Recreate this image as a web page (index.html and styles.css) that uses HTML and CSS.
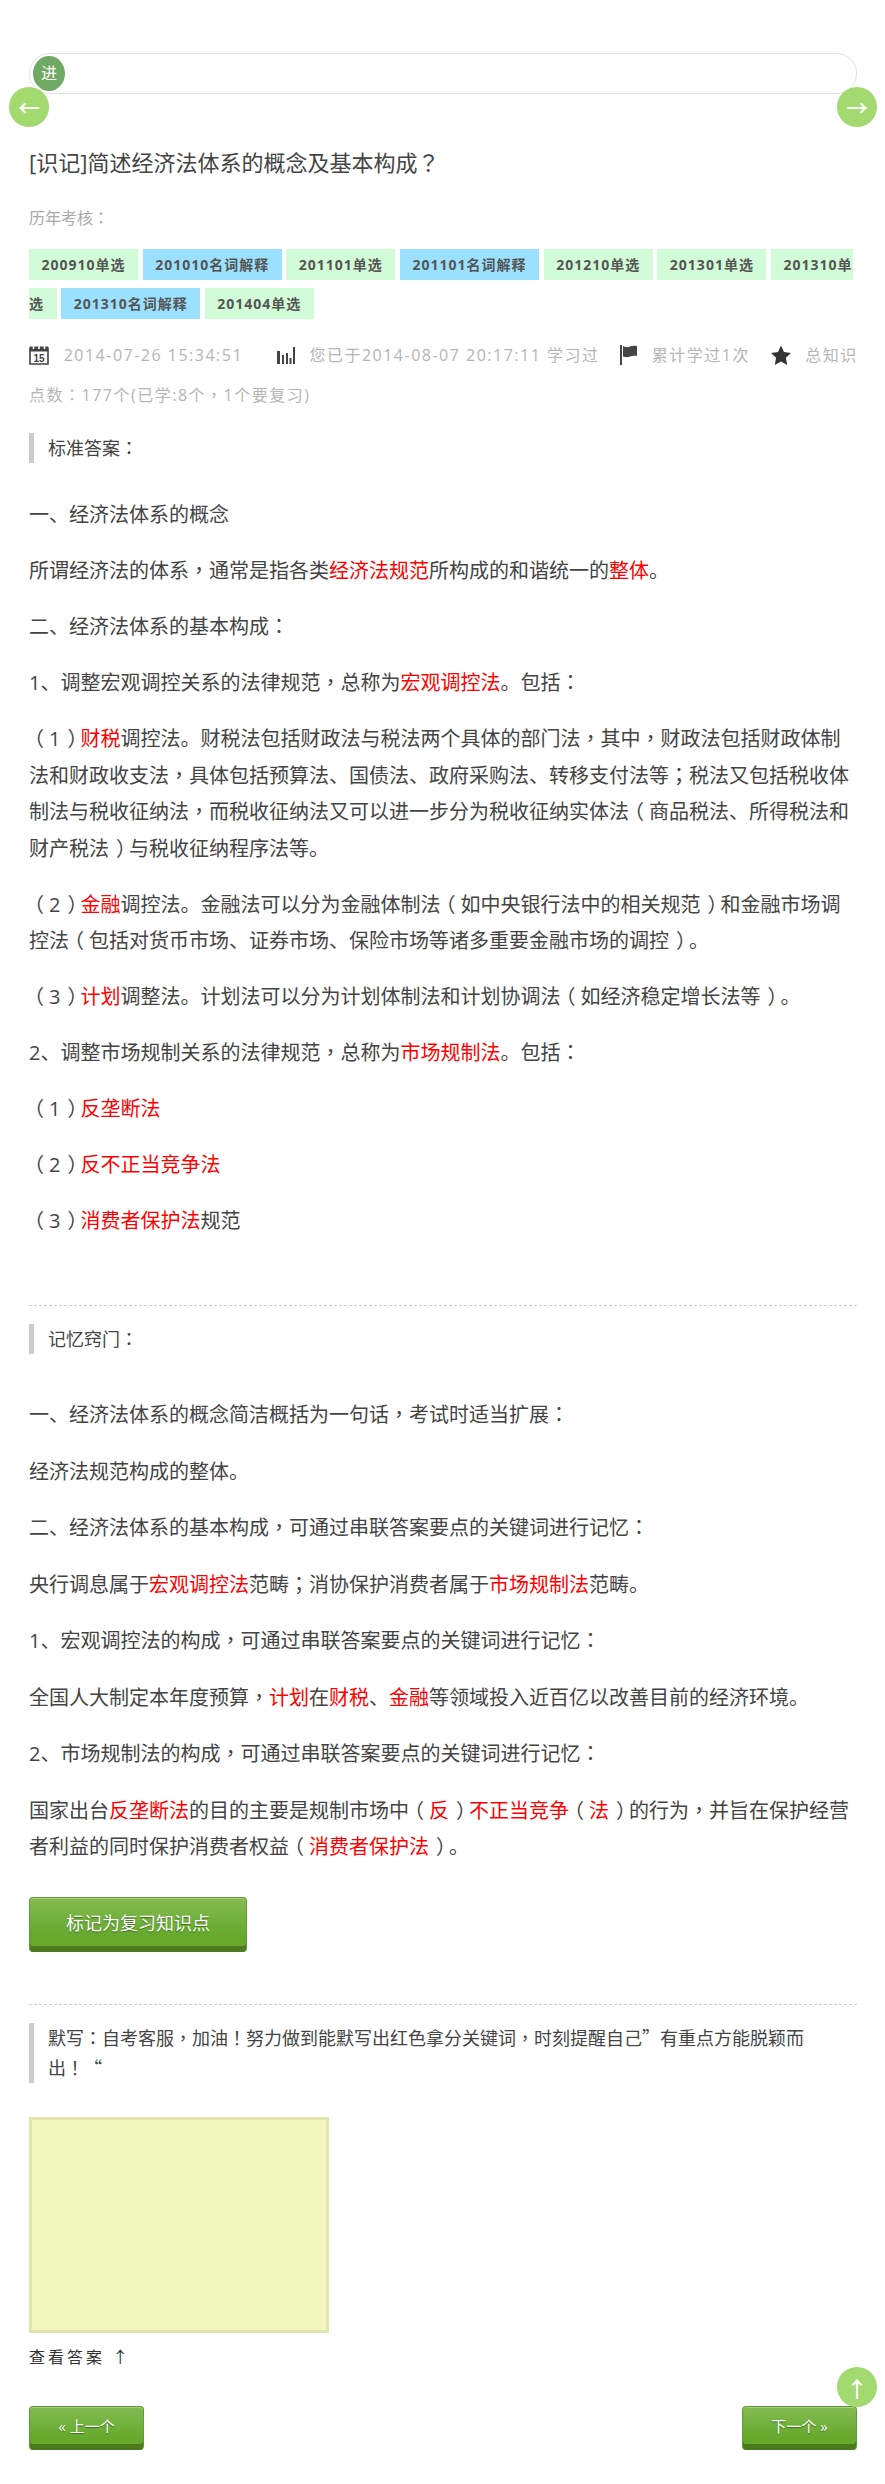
FILE: index.html
```html
<!DOCTYPE html>
<html>
<head>
<meta charset="utf-8">
<title>简述经济法体系的概念及基本构成</title>
<link rel="stylesheet" href="styles.css">
</head>
<body>
<div class="page">
  <div class="progress-wrap">
    <div class="progress"><span class="knob">进</span></div>
    <a class="round round-left">←</a>
    <a class="round round-right">→</a>
  </div>
  <h1 class="title">[识记]简述经济法体系的概念及基本构成<i class="p">？</i></h1>
  <p class="history">历年考核<i class="p">：</i></p>
  <div class="tags">
    <span class="tag">200910单选</span> <span class="tag blue">201010名词解释</span> <span class="tag">201101单选</span> <span class="tag blue">201101名词解释</span> <span class="tag">201210单选</span> <span class="tag">201301单选</span> <span class="tag">201310单选</span> <span class="tag blue">201310名词解释</span> <span class="tag">201404单选</span>
  </div>
  <div class="meta">
    <svg class="ico ico-cal" viewBox="0 0 20 20"><path d="M1 3h18v16H1z" fill="none" stroke="#444" stroke-width="1.6"/><path d="M1 1.500h18v5H1z" fill="#444"/><path d="M4.500 0v4M10 0v4M15.500 0v4" stroke="#fff" stroke-width="1.6"/><text x="10" y="16.500" class="ico-num">15</text></svg>
    <span class="m m-date">2014-07-26 15:34:51</span>
    <svg class="ico ico-bars" viewBox="0 0 18 17"><path d="M0 4h3v13H0zM5 8h2v9H5zM9 6h2v11H9zM12.500 11h2v6h-2zM16 0h2v17h-2z" fill="#444"/></svg>
    <span class="m m-last">您已于2014-08-07 20:17:11 学习过</span>
    <svg class="ico ico-flag" viewBox="0 0 17 20"><path d="M0 0h2v20H0z" fill="#444"/><path d="M3 1c3 1.500 5 1.500 7 .5s4-1 7-.5v10c-3-.5-5-.5-7 .5s-4 1-7 0z" fill="#444"/></svg>
    <span class="m m-count">累计学过1次</span>
    <svg class="ico ico-star" viewBox="0 0 20 20"><path d="M10 .5l3 6.600 7 .9-5.100 4.800 1.300 7.200L10 16.500 3.800 20l1.300-7.200L0 8l7-.9z" fill="#333"/></svg>
    <span class="m m-total">总知识点数<i class="p">：</i>177个(已学:8个<i class="p">，</i>1个要复习)</span>
  </div>
  <blockquote class="quote">标准答案<i class="p">：</i></blockquote>
  <div class="content first">
    <p>一、经济法体系的概念</p>
    <p>所谓经济法的体系<i class="p">，</i>通常是指各类<em>经济法规范</em>所构成的和谐统一的<em>整体</em>。</p>
    <p>二、经济法体系的基本构成<i class="p">：</i></p>
    <p>1、调整宏观调控关系的法律规范<i class="p">，</i>总称为<em>宏观调控法</em>。包括<i class="p">：</i></p>
    <p><i class="p po">（</i>1<i class="p pc">）</i><em>财税</em>调控法。财税法包括财政法与税法两个具体的部门法<i class="p">，</i>其中<i class="p">，</i>财政法包括财政体制法和财政收支法<i class="p">，</i>具体包括预算法、国债法、政府采购法、转移支付法等<i class="p">；</i>税法又包括税收体制法与税收征纳法<i class="p">，</i>而税收征纳法又可以进一步分为税收征纳实体法<i class="p po">（</i>商品税法、所得税法和财产税法<i class="p pc">）</i>与税收征纳程序法等。</p>
    <p><i class="p po">（</i>2<i class="p pc">）</i><em>金融</em>调控法。金融法可以分为金融体制法<i class="p po">（</i>如中央银行法中的相关规范<i class="p pc">）</i>和金融市场调控法<i class="p po">（</i>包括对货币市场、证券市场、保险市场等诸多重要金融市场的调控<i class="p pc">）</i>。</p>
    <p><i class="p po">（</i>3<i class="p pc">）</i><em>计划</em>调整法。计划法可以分为计划体制法和计划协调法<i class="p po">（</i>如经济稳定增长法等<i class="p pc">）</i>。</p>
    <p>2、调整市场规制关系的法律规范<i class="p">，</i>总称为<em>市场规制法</em>。包括<i class="p">：</i></p>
    <p><i class="p po">（</i>1<i class="p pc">）</i><em>反垄断法</em></p>
    <p><i class="p po">（</i>2<i class="p pc">）</i><em>反不正当竞争法</em></p>
    <p><i class="p po">（</i>3<i class="p pc">）</i><em>消费者保护法</em>规范</p>
  </div>
  <hr class="dash dash-1">
  <blockquote class="quote quote-2">记忆窍门<i class="p">：</i></blockquote>
  <div class="content second">
    <p>一、经济法体系的概念简洁概括为一句话<i class="p">，</i>考试时适当扩展<i class="p">：</i></p>
    <p>经济法规范构成的整体。</p>
    <p>二、经济法体系的基本构成<i class="p">，</i>可通过串联答案要点的关键词进行记忆<i class="p">：</i></p>
    <p>央行调息属于<em>宏观调控法</em>范畴<i class="p">；</i>消协保护消费者属于<em>市场规制法</em>范畴。</p>
    <p>1、宏观调控法的构成<i class="p">，</i>可通过串联答案要点的关键词进行记忆<i class="p">：</i></p>
    <p>全国人大制定本年度预算<i class="p">，</i><em>计划</em>在<em>财税</em>、<em>金融</em>等领域投入近百亿以改善目前的经济环境。</p>
    <p>2、市场规制法的构成<i class="p">，</i>可通过串联答案要点的关键词进行记忆<i class="p">：</i></p>
    <p>国家出台<em>反垄断法</em>的目的主要是规制市场中<i class="p po">（</i><em>反</em><i class="p pc">）</i><em>不正当竞争</em><i class="p po">（</i><em>法</em><i class="p pc">）</i>的行为<i class="p">，</i>并旨在保护经营者利益的同时保护消费者权益<i class="p po">（</i><em>消费者保护法</em><i class="p pc">）</i>。</p>
  </div>
  <a class="btn btn-mark">标记为复习知识点</a>
  <hr class="dash dash-2">
  <blockquote class="quote quote-3">默写<i class="p">：</i>自考客服<i class="p">，</i>加油<i class="p">！</i>努力做到能默写出红色拿分关键词<i class="p">，</i>时刻提醒自己<i class="p">”</i>有重点方能脱颖而出<i class="p">！“</i></blockquote>
  <div class="note"></div>
  <p class="reveal">查看答案 ↑</p>
  <div class="pager">
    <a class="btn btn-page">« 上一个</a>
    <a class="btn btn-page">下一个 »</a>
    <a class="round round-up">↑</a>
  </div>
</div>
</body>
</html>
```
FILE: styles.css
```css
* { box-sizing: border-box; }
html, body { margin: 0; padding: 0; background: #fff; }
body { font-family: "Open Sans", "Noto Sans CJK SC", sans-serif; color: #444; text-spacing-trim: space-all; }
.page { padding: 53px 28px 34px 29px; }
.p { font-style: normal; font-family: "Noto Sans CJK TC", sans-serif; line-height: 0; }
.po { margin: 0 5px 0 -5px; }
.pc { margin: 0 -7px 0 7px; }

.progress-wrap { position: relative; height: 41px; }
.progress { position: relative; height: 41px; border: 1px solid #e3e4da; border-radius: 20px; }
.knob { position: absolute; left: 3px; top: 2px; width: 32px; height: 35px; border-radius: 50%; background: #70a963; color: #fff; font-size: 16px; line-height: 35px; text-align: center; }
.round { position: absolute; width: 40px; height: 40px; border-radius: 50%; background: #a2da6f; color: #fff; font-family: "Noto Sans CJK SC", sans-serif; font-size: 22px; font-weight: 500; line-height: 38px; text-align: center; }
.round-left { left: -20px; top: 34px; }
.round-right { right: -20px; top: 34px; }

.title { margin: 49px 0 0; font-size: 22px; font-weight: 400; line-height: 38px; color: #444; }
.history { margin: 18px 0 0; font-size: 16px; line-height: 38px; color: #aaa; }

.tags { margin-top: 9px; line-height: 38.500px; font-size: 14px; word-spacing: 1px; }
.tag { padding: 6px 12.500px; background: #d2fcd8; font-weight: 700; letter-spacing: 1px; color: #555; }
.tag.blue { background: #9be1ff; }

.meta { margin: 12px -5px 0 0; font-size: 16px; line-height: 40px; color: #b5b5b5; letter-spacing: 1.500px; }
.ico { display: inline-block; vertical-align: -4px; }
.ico-cal, .ico-star { width: 20px; height: 20px; }
.ico-bars { width: 18px; height: 17px; vertical-align: -3px; }
.ico-flag { width: 17px; height: 20px; }
.ico-num { font: 700 10px "Liberation Sans", sans-serif; fill: #444; text-anchor: middle; letter-spacing: 0; }
.m { margin: 0 15px 0 9px; }
.m-date { margin-right: 28px; }
.m-total { margin-right: 0; }

.quote { margin: 18px 0 0; padding-left: 14px; border-left: 5px solid #ccc; font-size: 18px; line-height: 30px; color: #444; }
.content { font-size: 20px; line-height: 36.500px; color: #444; }
.content p { margin: 0 0 19.500px; }
.content em { font-style: normal; color: #f00; }
.first { margin-top: 34px; }
.second { margin-top: 43px; }
.second p { margin-bottom: 20px; }

.dash { margin: 0; border: 0; border-top: 1px dashed #ccc; }
.dash-1 { margin-top: 65.500px; }
.quote-2 { margin-top: 18px; }

.btn { display: block; color: #fff; text-align: center; border: 1px solid #5f9a35; border-bottom: 0; border-radius: 4px; background: linear-gradient(#84bb53, #66a92d 70%); box-shadow: inset 0 1px 0 #a6d07c, inset 0 -6px 0 #4b7a1f; text-shadow: 0 1px 1px #3d6a1a; }
.btn-mark { width: 218px; height: 55px; margin-top: 31.500px; font-size: 18px; line-height: 50px; }
.dash-2 { margin-top: 52px; }
.quote-3 { margin-top: 18px; }
.note { width: 300px; height: 216px; margin-top: 34px; background: #f2f6bf; border: 3px solid #e2e6ae; }
.reveal { margin: 9px 0 0; font-size: 16px; line-height: 30px; letter-spacing: 3px; color: #333; }

.pager { position: relative; display: flex; justify-content: space-between; margin-top: 34px; }
.btn-page { width: 115px; height: 44px; font-size: 15px; line-height: 38px; }
.round-up { right: -20px; top: -39px; line-height: 40px; }
```
